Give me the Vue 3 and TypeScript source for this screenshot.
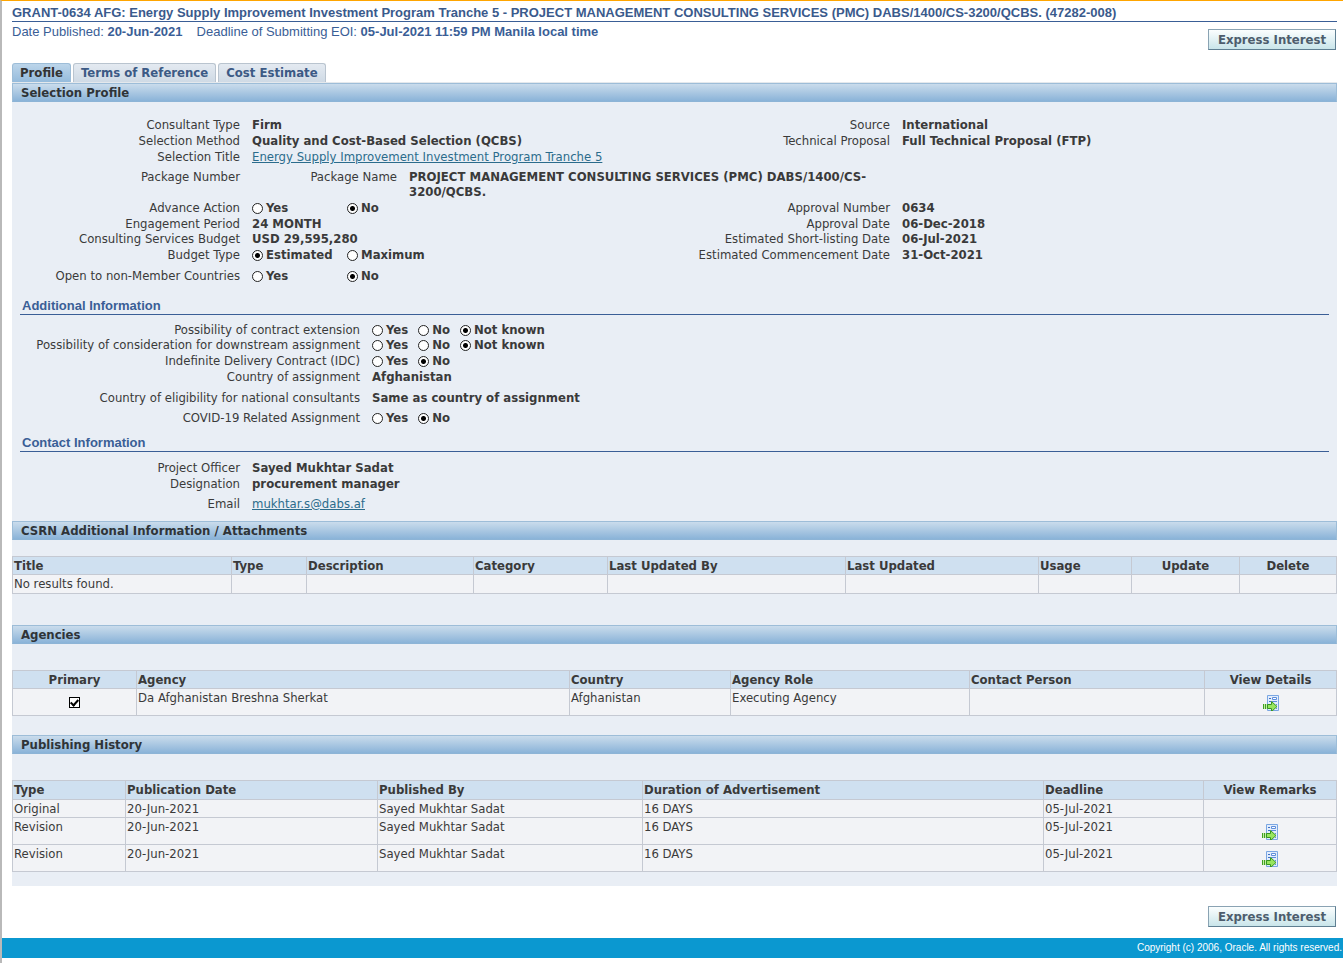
<script setup lang="ts">
import { ref } from 'vue'

interface Choice { options: string[]; selected: string }
interface Spacing { short?: boolean; space?: 'small' | 'large' }
interface Field extends Spacing { label: string; value?: string; link?: string; choice?: Choice }
interface PairRow extends Spacing { left: Field; right?: Field }
interface Column { title: string; width: number; center?: boolean }

const yesNo = (selected: string): Choice => ({ options: ['Yes', 'No'], selected })
const yesNoUnknown = (selected: string): Choice => ({ options: ['Yes', 'No', 'Not known'], selected })

const tabs = ['Profile', 'Terms of Reference', 'Cost Estimate']
const activeTab = ref('Profile')

const summaryRows: PairRow[] = [
  { left: { label: 'Consultant Type', value: 'Firm' }, right: { label: 'Source', value: 'International' } },
  { left: { label: 'Selection Method', value: 'Quality and Cost-Based Selection (QCBS)' }, right: { label: 'Technical Proposal', value: 'Full Technical Proposal (FTP)' } },
  { left: { label: 'Selection Title', link: 'Energy Supply Improvement Investment Program Tranche 5' } },
]

const budgetRows: PairRow[] = [
  { left: { label: 'Advance Action', choice: yesNo('No') }, right: { label: 'Approval Number', value: '0634' } },
  { left: { label: 'Engagement Period', value: '24 MONTH' }, right: { label: 'Approval Date', value: '06-Dec-2018' }, short: true },
  { left: { label: 'Consulting Services Budget', value: 'USD 29,595,280' }, right: { label: 'Estimated Short-listing Date', value: '06-Jul-2021' } },
  { left: { label: 'Budget Type', choice: { options: ['Estimated', 'Maximum'], selected: 'Estimated' } }, right: { label: 'Estimated Commencement Date', value: '31-Oct-2021' } },
  { left: { label: 'Open to non-Member Countries', choice: yesNo('No') }, space: 'large' },
]

const additionalFields: Field[] = [
  { label: 'Possibility of contract extension', choice: yesNoUnknown('Not known'), short: true },
  { label: 'Possibility of consideration for downstream assignment', choice: yesNoUnknown('Not known') },
  { label: 'Indefinite Delivery Contract (IDC)', choice: yesNo('No') },
  { label: 'Country of assignment', value: 'Afghanistan' },
  { label: 'Country of eligibility for national consultants', value: 'Same as country of assignment', space: 'large' },
  { label: 'COVID-19 Related Assignment', choice: yesNo('No'), space: 'small' },
]

const contactFields: Field[] = [
  { label: 'Project Officer', value: 'Sayed Mukhtar Sadat' },
  { label: 'Designation', value: 'procurement manager' },
  { label: 'Email', link: 'mukhtar.s@dabs.af', space: 'small' },
]

const attachmentColumns: Column[] = [
  { title: 'Title', width: 219 },
  { title: 'Type', width: 75 },
  { title: 'Description', width: 167 },
  { title: 'Category', width: 134 },
  { title: 'Last Updated By', width: 238 },
  { title: 'Last Updated', width: 193 },
  { title: 'Usage', width: 93 },
  { title: 'Update', width: 108, center: true },
  { title: 'Delete', width: 97, center: true },
]

const agencyColumns: Column[] = [
  { title: 'Primary', width: 124, center: true },
  { title: 'Agency', width: 433 },
  { title: 'Country', width: 161 },
  { title: 'Agency Role', width: 239 },
  { title: 'Contact Person', width: 235 },
  { title: 'View Details', width: 132, center: true },
]

const historyColumns: Column[] = [
  { title: 'Type', width: 113 },
  { title: 'Publication Date', width: 252 },
  { title: 'Published By', width: 265 },
  { title: 'Duration of Advertisement', width: 401 },
  { title: 'Deadline', width: 160 },
  { title: 'View Remarks', width: 133, center: true },
]

const historyRows = [
  { cells: ['Original', '20-Jun-2021', 'Sayed Mukhtar Sadat', '16 DAYS', '05-Jul-2021'], remarks: false },
  { cells: ['Revision', '20-Jun-2021', 'Sayed Mukhtar Sadat', '16 DAYS', '05-Jul-2021'], remarks: true },
  { cells: ['Revision', '20-Jun-2021', 'Sayed Mukhtar Sadat', '16 DAYS', '05-Jul-2021'], remarks: true },
]

const share = (columns: Column[], column: Column): string =>
  `${(column.width / columns.reduce((sum, c) => sum + c.width, 0)) * 100}%`
</script>

<template>
  <div class="page">
    <svg class="symbols" aria-hidden="true">
      <symbol id="open-record" viewBox="0 0 16 16">
        <path d="M4.500 .500h11v15h-11z" fill="#e3edfc" stroke="#7aa6e2" />
        <path d="M6 3h2v1H6zM6 6h2v1H6z" fill="#3d6fc4" />
        <path d="M9.500 2.500h4v2h-4z" fill="#fff" stroke="#5d8ddb" />
        <path d="M9 6h5v1H9zM13 9h1v1h-1zM13 13h1v1h-1z" fill="#5d8ddb" />
        <path d="M0 9h1v5H0zM2 9h1v5H2z" fill="#3fa023" />
        <path d="M1 9h1v5H1zM3 9h1v5H3z" fill="#c4eba8" />
        <path d="M4.500 9.500h4v-3l5.500 5-5.500 5v-3h-4z" fill="#97e55e" stroke="#36951f" />
      </symbol>
    </svg>

    <main class="content">
      <h1>GRANT-0634 AFG: Energy Supply Improvement Investment Program Tranche 5 - PROJECT MANAGEMENT CONSULTING SERVICES (PMC) DABS/1400/CS-3200/QCBS. (47282-008)</h1>
      <div class="intro">
        <p class="dates">
          <span>Date Published: <b>20-Jun-2021</b></span>
          <span>Deadline of Submitting EOI: <b>05-Jul-2021 11:59 PM Manila local time</b></span>
        </p>
        <button type="button" class="action">Express Interest</button>
      </div>

      <div class="tabs" role="tablist">
        <button
          v-for="tab in tabs" :key="tab" type="button" role="tab"
          class="tab" :class="{ active: tab === activeTab }"
          :aria-selected="tab === activeTab" @click="activeTab = tab"
        >{{ tab }}</button>
      </div>

      <div class="panel">
        <h2 class="bar">Selection Profile</h2>
        <div class="details">
          <template v-for="(group, g) in [summaryRows, budgetRows]" :key="g">
            <div v-if="g === 1" class="package">
              <span class="label">Package Number</span>
              <span class="label package-name">Package Name</span>
              <span class="value package-value">PROJECT MANAGEMENT CONSULTING SERVICES (PMC) DABS/1400/CS-3200/QCBS.</span>
            </div>
            <div v-for="row in group" :key="row.left.label" class="pair" :class="[row.space, { short: row.short }]">
              <span class="label">{{ row.left.label }}</span>
              <span v-if="row.left.choice" class="choices wide" role="radiogroup" :aria-label="row.left.label">
                <label v-for="option in row.left.choice.options" :key="option">
                  <input type="radio" :name="row.left.label" :value="option" :checked="option === row.left.choice.selected">{{ option }}
                </label>
              </span>
              <a v-else-if="row.left.link" href="#">{{ row.left.link }}</a>
              <span v-else class="value">{{ row.left.value }}</span>
              <template v-if="row.right">
                <span class="label">{{ row.right.label }}</span>
                <span class="value">{{ row.right.value }}</span>
              </template>
            </div>
          </template>
        </div>

        <h3>Additional Information</h3>
        <div class="fields additional">
          <div v-for="field in additionalFields" :key="field.label" class="field" :class="[field.space, { short: field.short }]">
            <span class="label">{{ field.label }}</span>
            <span v-if="field.choice" class="choices" role="radiogroup" :aria-label="field.label">
              <label v-for="option in field.choice.options" :key="option">
                <input type="radio" :name="field.label" :value="option" :checked="option === field.choice.selected">{{ option }}
              </label>
            </span>
            <span v-else class="value">{{ field.value }}</span>
          </div>
        </div>

        <h3>Contact Information</h3>
        <div class="fields contact">
          <div v-for="field in contactFields" :key="field.label" class="field" :class="field.space">
            <span class="label">{{ field.label }}</span>
            <a v-if="field.link" href="#">{{ field.link }}</a>
            <span v-else class="value">{{ field.value }}</span>
          </div>
        </div>

        <h2 class="bar">CSRN Additional Information / Attachments</h2>
        <table class="attachments">
          <colgroup><col v-for="c in attachmentColumns" :key="c.title" :style="{ width: share(attachmentColumns, c) }"></colgroup>
          <thead><tr><th v-for="c in attachmentColumns" :key="c.title" scope="col" :class="{ center: c.center }">{{ c.title }}</th></tr></thead>
          <tbody><tr><td>No results found.</td><td v-for="n in 8" :key="n"></td></tr></tbody>
        </table>

        <h2 class="bar">Agencies</h2>
        <table class="agencies">
          <colgroup><col v-for="c in agencyColumns" :key="c.title" :style="{ width: share(agencyColumns, c) }"></colgroup>
          <thead><tr><th v-for="c in agencyColumns" :key="c.title" scope="col" :class="{ center: c.center }">{{ c.title }}</th></tr></thead>
          <tbody>
            <tr class="tall">
              <td class="center"><input type="checkbox" checked aria-label="Primary"></td>
              <td>Da Afghanistan Breshna Sherkat</td>
              <td>Afghanistan</td>
              <td>Executing Agency</td>
              <td></td>
              <td class="center"><a href="#" class="icon" aria-label="View Details"><svg><use href="#open-record" /></svg></a></td>
            </tr>
          </tbody>
        </table>

        <h2 class="bar">Publishing History</h2>
        <table class="history">
          <colgroup><col v-for="c in historyColumns" :key="c.title" :style="{ width: share(historyColumns, c) }"></colgroup>
          <thead><tr><th v-for="c in historyColumns" :key="c.title" scope="col" :class="{ center: c.center }">{{ c.title }}</th></tr></thead>
          <tbody>
            <tr v-for="(row, r) in historyRows" :key="r" :class="{ tall: row.remarks }">
              <td v-for="(cell, i) in row.cells" :key="i">{{ cell }}</td>
              <td class="center"><a v-if="row.remarks" href="#" class="icon" aria-label="View Remarks"><svg><use href="#open-record" /></svg></a></td>
            </tr>
          </tbody>
        </table>
      </div>

      <div class="bottom-actions"><button type="button" class="action">Express Interest</button></div>
    </main>
    <footer>Copyright (c) 2006, Oracle. All rights reserved.</footer>
  </div>
</template>

<style>
body {
  margin: 0;
  background: #fff;
}
</style>

<style scoped>
* {
  box-sizing: border-box;
}
.page {
  min-height: 100vh;
  border-left: 2px solid #b9b9b9;
  border-top: 1px solid #ffa500;
  color: #3a3a3a;
  font: 13px/16px Tahoma, "DejaVu Sans Condensed", "DejaVu Sans", sans-serif;
}
.symbols {
  display: none;
}
.content {
  padding: 3px 6px 0 10px;
}
h1, h2, h3, p {
  margin: 0;
}
h1 {
  border-bottom: 1px solid #3a5e96;
  color: #3a5a8c;
  font: bold 13px/17px Arial, "Liberation Sans", sans-serif;
}
.intro {
  display: flex;
  justify-content: space-between;
  height: 41px;
}
.dates {
  display: flex;
  flex-wrap: wrap;
  align-content: flex-start;
  gap: 14px;
  padding-top: 2px;
  color: #3a5e96;
  font: 13px/16px Arial, "Liberation Sans", sans-serif;
}
.action {
  height: 21px;
  margin-top: 7px;
  margin-right: 1px;
  padding: 0 9px;
  border: 1px solid #8aa3b3;
  border-right-color: #5f7f92;
  border-bottom-color: #5f7f92;
  background: linear-gradient(#fbfefe, #c9e5ea);
  color: #4d5d6d;
  font: bold 13px/19px Tahoma, "DejaVu Sans Condensed", sans-serif;
}
.tabs {
  display: flex;
  gap: 2px;
}
.tab {
  height: 19px;
  padding: 0 7px;
  border: 1px solid #b9c4cf;
  border-bottom: 0;
  border-radius: 3px 3px 0 0;
  background: linear-gradient(#e4eaf1, #cfdae5);
  color: #3c5a85;
  font: bold 13px/18px Tahoma, "DejaVu Sans Condensed", sans-serif;
}
.tab.active {
  border-color: #9dbdd8;
  background: linear-gradient(#bcd5ea, #95bbdc);
  color: #333;
}
.panel {
  padding-bottom: 14px;
  border-top: 1px solid #e4e8ec;
  background: #e9eef5;
}
.bar {
  height: 19px;
  padding-left: 8px;
  border: 1px solid #9dbdd8;
  border-bottom-color: #8db4d6;
  background: linear-gradient(#cadcec, #8ab3d8);
  color: #2f3438;
  font: bold 13px/18px Tahoma, "DejaVu Sans Condensed", sans-serif;
}
.details {
  padding: 15px 0 14px;
}
.pair {
  display: grid;
  grid-template-columns: 228px minmax(0, 426fr) 200px minmax(0, 435fr);
  column-gap: 12px;
  height: 16px;
}
.short {
  height: 15px;
}
.small {
  margin-top: 4px;
}
.large {
  margin-top: 5px;
}
.label {
  text-align: right;
  white-space: nowrap;
}
.value {
  font-weight: bold;
}
.package {
  display: flex;
  padding: 4px 0 1px;
  line-height: 15px;
}
.package .label {
  flex: 0 0 228px;
}
.package .package-name {
  flex: 0 0 157px;
}
.package-value {
  max-width: 492px;
  padding-left: 12px;
}
a {
  color: #2b6c8c;
}
h3 {
  margin: 0 8px;
  padding-left: 2px;
  border-bottom: 1px solid #3a5e96;
  color: #3a5e96;
  font: bold 13px/16px Arial, "Liberation Sans", sans-serif;
}
.fields {
  display: flex;
  flex-direction: column;
}
.additional {
  padding: 7px 0 9px;
}
.contact {
  padding: 8px 0 9px;
}
.field {
  display: flex;
  gap: 12px;
}
.additional .label {
  flex: 0 0 348px;
}
.contact .label {
  flex: 0 0 228px;
}
.choices {
  display: flex;
  gap: 10px;
  font-weight: bold;
}
.choices label {
  display: flex;
  align-items: center;
  gap: 3px;
  height: 16px;
  white-space: nowrap;
}
.choices.wide {
  gap: 0;
}
.choices.wide label {
  width: 95px;
}
input[type="radio"] {
  appearance: none;
  width: 11px;
  height: 11px;
  margin: 0;
  border: 1px solid #222;
  border-radius: 50%;
  background: #fff;
}
input[type="radio"]:checked {
  background: radial-gradient(circle, #000 0 2px, #fff 3px);
}
input[type="checkbox"] {
  appearance: none;
  display: block;
  width: 11px;
  height: 11px;
  margin: 0 auto;
  border: 1px solid #000;
  background: #fff;
}
input[type="checkbox"]:checked::after {
  content: "";
  display: block;
  width: 3px;
  height: 6px;
  margin: 0 auto;
  border: solid #000;
  border-width: 0 2px 2px 0;
  box-sizing: content-box;
  transform: rotate(42deg);
}
table {
  width: 100%;
  table-layout: fixed;
  border-collapse: collapse;
}
th, td {
  height: 18px;
  padding: 1px 1px 0;
  border: 1px solid #c5c9d2;
  text-align: left;
  vertical-align: top;
}
th {
  background: #cfe0f0;
}
td {
  background: #f2f3f6;
}
.tall td {
  height: 27px;
}
.center {
  text-align: center;
}
td.center {
  vertical-align: middle;
}
.icon, .icon svg {
  display: block;
  width: 16px;
  height: 16px;
  margin: 0 auto;
}
.attachments {
  margin: 16px 0 31px;
}
.attachments td {
  height: 19px;
}
.agencies {
  margin: 26px 0 19px;
}
.history {
  margin-top: 26px;
}
.history th {
  height: 19px;
}
.bottom-actions {
  display: flex;
  justify-content: flex-end;
  padding: 13px 0 11px;
}
footer {
  height: 20px;
  padding-right: 1px;
  background: #0b98d0;
  color: #fff;
  text-align: right;
  font: 10px/20px Arial, "Liberation Sans", sans-serif;
}
</style>
